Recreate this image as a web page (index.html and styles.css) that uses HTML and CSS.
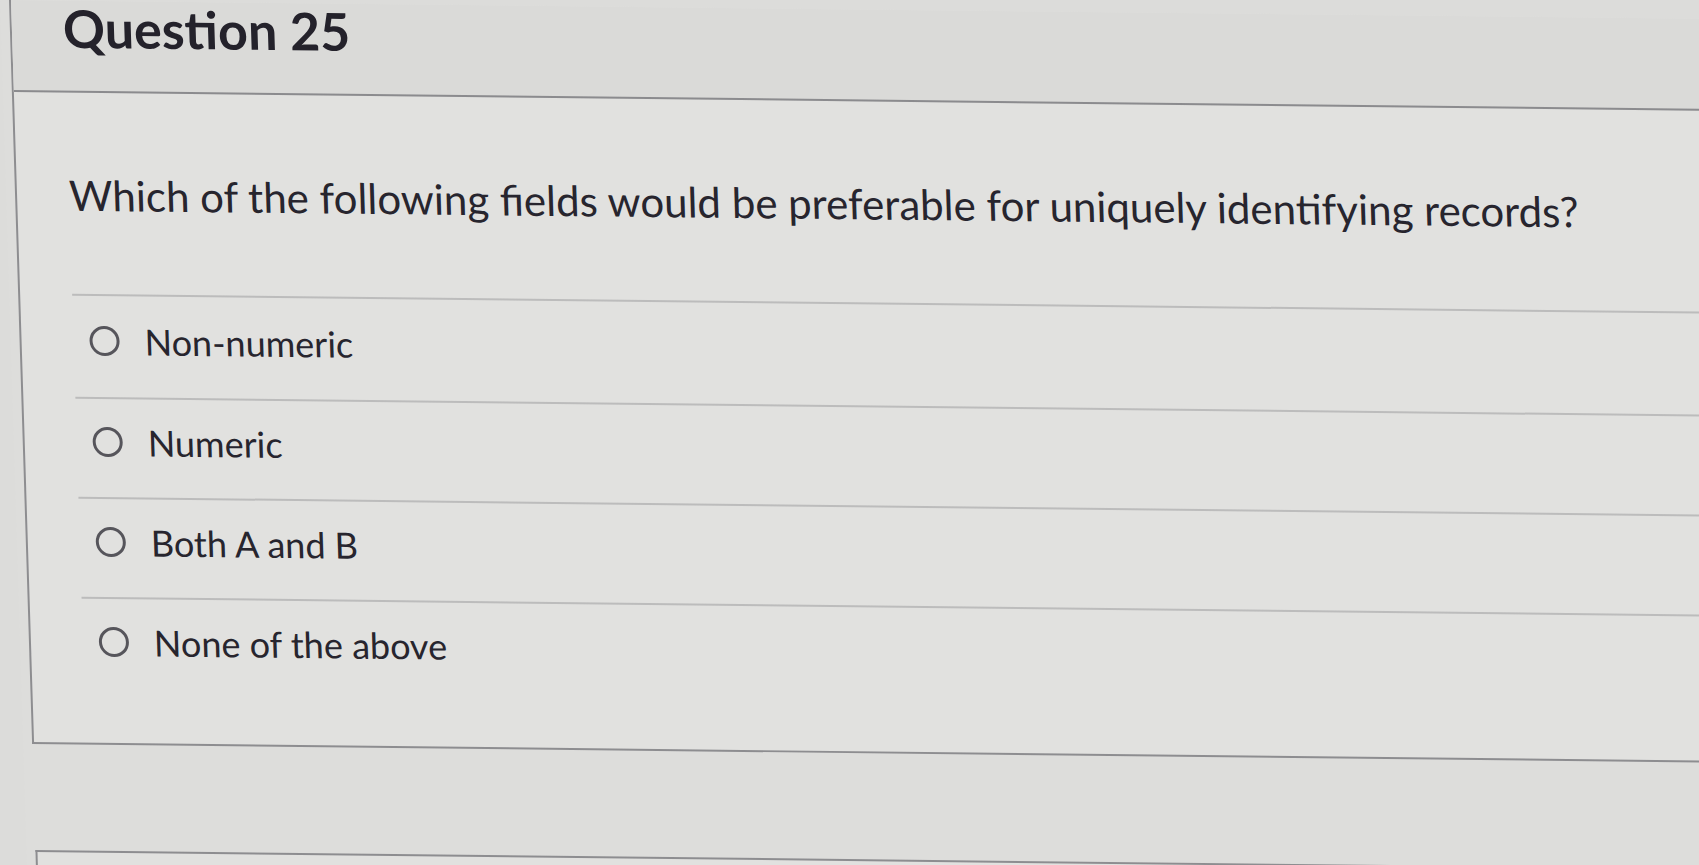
FILE: index.html
```html
<!DOCTYPE html>
<html lang="en">
<head>
<meta charset="utf-8">
<title>Question 25</title>
<link rel="stylesheet" href="styles.css">
</head>
<body>
<div class="page">
  <div class="question">
    <div class="q-header">
      <h2 class="q-name">Question 25</h2>
    </div>
    <div class="q-body">
      <p class="q-text">Which of the following fields would be preferable for uniquely identifying records?</p>
      <div class="answers">
        <label class="answer"><span class="radio"></span><span class="answer-text">Non-numeric</span></label>
        <label class="answer"><span class="radio"></span><span class="answer-text">Numeric</span></label>
        <label class="answer"><span class="radio"></span><span class="answer-text">Both A and B</span></label>
        <label class="answer"><span class="radio"></span><span class="answer-text">None of the above</span></label>
      </div>
    </div>
  </div>
  <div class="question next"></div>
</div>
</body>
</html>
```
FILE: styles.css
```css
html, body {
  margin: 0;
  padding: 0;
  height: 100%;
  overflow: hidden;
  background: #dcdcda;
}

.page {
  width: 1780px;
  height: 960px;
  padding-left: 9px;
  box-sizing: border-box;
  font-family: Lato, "Open Sans", sans-serif;
  color: #27252e;
  background: #dddddb;
  transform-origin: 0 0;
  transform: skew(1.78deg, 0.63deg);
  display: flex;
  flex-direction: column;
}

.question {
  border-left: 2px solid #8d8d90;
  border-bottom: 2px solid #8d8d90;
  background: #e1e1df;
}

.q-header {
  height: 88px;
  padding-top: 2px;
  box-sizing: content-box;
  border-bottom: 2px solid #8b8b8e;
  background: #dadad8;
}

.q-name {
  margin: 0;
  padding-left: 51px;
  font-size: 52px;
  line-height: 50px;
  font-weight: 700;
  color: #24222b;
}

.q-body {
  padding-left: 52px;
  padding-bottom: 81px;
}

.q-text {
  margin: 0;
  padding-top: 77px;
  padding-bottom: 74px;
  font-size: 42px;
  line-height: 50px;
  font-weight: 400;
}

.answers {
  display: flex;
  flex-direction: column;
}

.answer {
  display: flex;
  align-items: center;
  height: 40px;
  padding: 23px 0 35px 16px;
  border-top: 2px solid #bcbcbc;
  font-size: 36px;
}

.answer:first-child {
  padding-top: 25px;
  padding-bottom: 36px;
}

.answer:last-child {
  padding-bottom: 0;
}

.radio {
  width: 24px;
  height: 24px;
  border: 3px solid #56555b;
  border-radius: 50%;
  flex: none;
  margin-right: 25px;
}

.answer-text {
  line-height: 40px;
}

.question.next {
  margin-top: 106px;
  border-top: 2px solid #8d8d90;
  border-bottom: none;
  flex: 1;
}
```
